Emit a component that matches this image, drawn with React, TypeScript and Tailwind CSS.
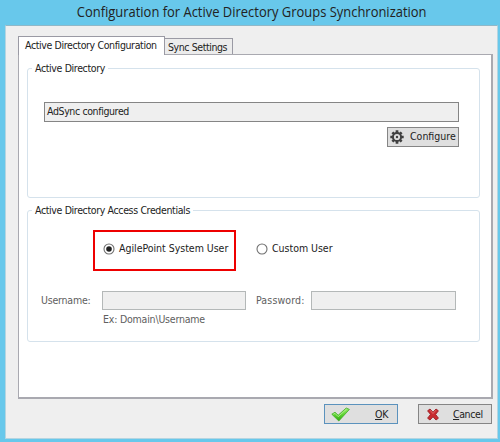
import type { ReactNode } from "react";

function Group({ title, className, children }: { title: string; className: string; children: ReactNode }) {
  return (
    <fieldset className={`relative w-[453px] rounded-[3px] border border-[#d5e2ec] ${className}`}>
      <span className="absolute -top-[9px] left-[4px] bg-white px-[3px] leading-4 tracking-[-0.36px]">
        {title}
      </span>
      {children}
    </fieldset>
  );
}

function Radio({ checked }: { checked?: boolean }) {
  return (
    <svg width="12" height="12" viewBox="0 0 12 12" className="shrink-0">
      <circle cx="6" cy="6" r="5" fill="#fff" stroke="#707070" strokeWidth="1.1" />
      {checked && <circle cx="6" cy="6" r="2.8" fill="#202020" />}
    </svg>
  );
}

function GearIcon() {
  return (
    <svg width="14" height="14" viewBox="0 0 14 14" className="shrink-0">
      <g stroke="#404040" strokeWidth="2.7">
        <path d="M7 .3v13.4M.3 7h13.4M2.4 2.4l9.2 9.2M11.6 2.4l-9.2 9.2" />
      </g>
      <circle cx="7" cy="7" r="4.1" fill="#dedede" stroke="#404040" strokeWidth="2" />
      <circle cx="7" cy="7" r="1.2" fill="#404040" />
    </svg>
  );
}

function CheckIcon() {
  return (
    <svg width="19" height="15" viewBox="0 0 19 15" className="shrink-0">
      <defs>
        <linearGradient id="check" x1="0" y1="0" x2="0" y2="1">
          <stop offset="0" stopColor="#9ae86b" />
          <stop offset="0.55" stopColor="#57d22c" />
          <stop offset="1" stopColor="#2fa313" />
        </linearGradient>
      </defs>
      <path d="M.8 7.2 4 5.2l3.2 3L15.2 1l3.2 1.4L7.8 14z" fill="url(#check)" stroke="#43ac28" strokeWidth=".8" strokeLinejoin="round" />
      <path d="M2.3 7.3 4 6.4l3.2 3.2 8.3-7.4" fill="none" stroke="#b9f397" strokeWidth=".8" />
    </svg>
  );
}

function CrossIcon() {
  return (
    <svg width="12" height="13" viewBox="0 0 12 13" className="shrink-0">
      <path
        d="M3 1 6 4.2 9 1l2.4 1.8-2.8 3.6 2.8 3.8L9 12 6 8.8 3 12 .6 10.2l2.9-3.8L.6 2.8z"
        fill="#c92b30"
        stroke="#9d1d22"
        strokeWidth=".9"
        strokeLinejoin="round"
      />
      <path d="M3 2.2 6 5.5l3-3.3" fill="none" stroke="#e46b6b" strokeWidth=".9" />
    </svg>
  );
}

export default function App() {
  return (
    <main className="h-[442px] w-[500px] overflow-hidden bg-[#68c8eb] pl-[5px] font-['DejaVu_Sans_Condensed','DejaVu_Sans',sans-serif] text-[10.5px] whitespace-nowrap text-[#222]">
      <h1 className="flex h-[25px] w-[493px] justify-center font-['Open_Sans',sans-serif] text-[15px] leading-[23px]">
        <span className="origin-center scale-x-[0.863]">Configuration for Active Directory Groups Synchronization</span>
      </h1>
      <div className="h-[414px] w-[493px] border border-[#b5d5e1] border-t-[#90b8c8] bg-[#efefef] pt-[10px] pl-[12px]">
        <div className="flex h-[18px] items-end">
          <div className="relative z-10 -mb-px h-[19px] w-[147px] border border-b-0 border-[#9a9aa4] bg-white pl-[6px] leading-[16px] tracking-[-0.37px]">
            Active Directory Configuration
          </div>
          <div className="h-[16px] w-[68px] border border-b-0 border-l-0 border-[#9a9aa4] bg-[#ececec] pl-[3px] leading-[17px] tracking-[-0.42px]">
            Sync Settings
          </div>
        </div>
        <section className="h-[345px] w-[475px] border border-r-2 border-b-2 border-[#a9a9b0] bg-white pt-[13px] pl-[8px]">
          <Group title="Active Directory" className="h-[130px] pt-[33px] pl-[16px]">
            <div className="h-[20px] w-[415px] border border-[#858585] bg-[#efefef] pl-[2px] leading-[17px] tracking-[-0.38px]">
              AdSync configured
            </div>
            <button className="mt-[5px] ml-[343px] flex h-[20px] w-[72px] items-center border border-[#858585] bg-[#dfdfdf] pl-[2px]">
              <GearIcon />
              <span className="mb-[2px] ml-[6px] leading-4">Configure</span>
            </button>
          </Group>

          <Group title="Active Directory Access Credentials" className="mt-[12px] h-[132px] pt-[19px]">
            <div className="flex">
              <div className="ml-[65px] flex h-[41px] w-[143px] items-center border-2 border-[#ee0000] pb-[4px] pl-[8px]">
                <Radio checked />
                <span className="mb-[2px] ml-[4px] leading-4 tracking-[-0.02px]">AgilePoint System User</span>
              </div>
              <div className="ml-[20px] flex h-[37px] items-center">
                <Radio />
                <span className="mb-[2px] ml-[4px] leading-4 tracking-[-0.02px]">Custom User</span>
              </div>
            </div>
            <div className="mt-[20px] flex text-[#606060]">
              <span className="ml-[13px] w-[61px] leading-[18px] tracking-[-0.2px]">Username:</span>
              <div className="h-[19px] w-[144px] border border-[#b4b8b8] bg-[#efefef]" />
              <span className="ml-[10px] w-[55px] leading-[18px] tracking-[0.15px]">Password:</span>
              <div className="h-[19px] w-[145px] border border-[#b4b8b8] bg-[#efefef]" />
            </div>
            <p className="mt-px ml-[75px] leading-4 tracking-[-0.2px] text-[#606060]">Ex: Domain\Username</p>
          </Group>
        </section>
        <div className="mt-[5px] flex gap-[20px] pl-[306px]">
          <button className="flex h-[20px] w-[74px] items-center border border-[#5b92bd] bg-[#dfdfdf] pl-[6px]">
            <CheckIcon />
            <span className="ml-[25px] leading-4 tracking-[-0.3px]"><u>O</u>K</span>
          </button>
          <button className="flex h-[20px] w-[74px] items-center border border-[#858585] bg-[#dfdfdf] pl-[8px]">
            <CrossIcon />
            <span className="ml-[14px] leading-4 tracking-[-0.4px]"><u>C</u>ancel</span>
          </button>
        </div>
      </div>
    </main>
  );
}
